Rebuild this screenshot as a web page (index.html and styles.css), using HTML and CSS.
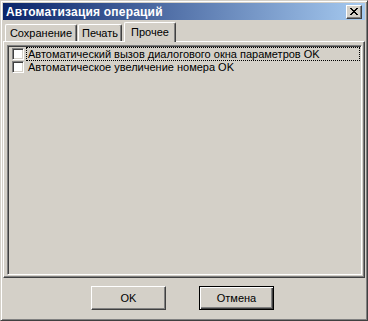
FILE: index.html
```html
<!DOCTYPE html>
<html lang="ru">
<head>
    <meta charset="UTF-8">
    <title>Автоматизация операций</title>
    <link rel="stylesheet" href="styles.css">
</head>
<body>

<div class="dialog">
    <div class="titlebar">
        <span class="title">Автоматизация операций</span>
        <span class="close">
            <svg width="8" height="7" viewBox="0 0 8 7" shape-rendering="crispEdges">
                <path d="M0 0h2v1H0zM6 0h2v1H6zM1 1h2v1H1zM5 1h2v1H5zM2 2h4v1H2zM3 3h2v1H3zM2 4h4v1H2zM1 5h2v1H1zM5 5h2v1H5zM0 6h2v1H0zM6 6h2v1H6z" fill="#000"/>
            </svg>
        </span>
    </div>

    <div class="tabs">
        <div class="tab tab-save">Сохранение</div>
        <div class="tab tab-print">Печать</div>
        <div class="tab tab-other active">Прочее</div>
    </div>

    <div class="panel">
        <div class="list">
            <div class="item">
                <span class="check"></span>
                <span class="label focus">Автоматический вызов диалогового окна параметров OK</span>
            </div>
            <div class="item">
                <span class="check"></span>
                <span class="label">Автоматическое увеличение номера OK</span>
            </div>
        </div>
    </div>

    <div class="buttons">
        <span class="btn">OK</span>
        <span class="btn default">Отмена</span>
    </div>
</div>

</body>
</html>
```

FILE: styles.css
```css
body {
    margin: 0;
    padding: 0;
    background-color: #d4d0c8;
    font-family: "Liberation Sans", Arial, sans-serif;
    font-size: 11px;
    color: #000;
}
.dialog {
    box-sizing: border-box;
    width: 368px;
    height: 321px;
    padding: 2px;
    background-color: #d4d0c8;
    border: 1px solid;
    border-color: #d4d0c8 #404040 #404040 #d4d0c8;
    box-shadow: inset 1px 1px #fff, inset -1px -1px #808080;
    display: flex;
    flex-direction: column;
}
.titlebar {
    height: 17px;
    background: linear-gradient(to right, #0a246a, #a6caf0);
    display: flex;
    align-items: center;
    padding: 0 3px 0 3px;
}
.title {
    flex: 1;
    color: #fff;
    font-weight: bold;
    font-size: 12px;
    letter-spacing: 0.2px;
}
.close {
    box-sizing: border-box;
    width: 16px;
    height: 14px;
    background-color: #d4d0c8;
    border: 1px solid;
    border-color: #fff #404040 #404040 #fff;
    box-shadow: inset -1px -1px #808080;
    display: flex;
    align-items: center;
    justify-content: center;
}
.tabs {
    height: 21px;
    display: flex;
    align-items: flex-end;
}
.tab {
    box-sizing: border-box;
    height: 17px;
    padding-top: 1px;
    border-top: 1px solid #fff;
    border-left: 1px solid #fff;
    border-right: 1px solid #404040;
    border-radius: 2px 2px 0 0;
    box-shadow: inset -1px 0 #808080;
    text-align: center;
    line-height: 14px;
    background-color: #d4d0c8;
}
.tab-save {
    width: 72px;
    margin-left: 2px;
}
.tab-print {
    width: 44px;
    margin-left: 1px;
}
.tab-other {
    width: 52px;
    margin-left: 2px;
}
.tab.active {
    position: relative;
    z-index: 1;
    height: 20px;
    margin-bottom: -1px;
    padding-top: 2px;
}
.panel {
    box-sizing: border-box;
    height: 237px;
    padding: 3px 1px 2px 3px;
    border: 1px solid;
    border-color: #fff #404040 #404040 #fff;
    box-shadow: inset -1px -1px #808080;
}
.list {
    box-sizing: border-box;
    height: 100%;
    width: 355px;
    padding: 0 2px;
    border: 1px solid;
    border-color: #808080 #fff #fff #808080;
    box-shadow: inset 1px 1px #404040, inset -1px -1px #d4d0c8;
}
.item {
    height: 13px;
    display: flex;
    align-items: center;
    margin-left: 2px;
}
.item:first-child {
    margin-top: 1px;
}
.check {
    box-sizing: border-box;
    width: 12px;
    height: 12px;
    background-color: #fff;
    border: 1px solid;
    border-color: #808080 #fff #fff #808080;
    box-shadow: inset 1px 1px #404040, inset -1px -1px #d4d0c8;
    margin-right: 3px;
}
.label {
    line-height: 12px;
    padding: 0 1px;
}
.label.focus {
    width: 330px;
    outline: 1px dotted #000;
}
.buttons {
    display: flex;
    gap: 33px;
    padding-left: 88px;
    margin-top: 8px;
}
.btn {
    box-sizing: border-box;
    width: 75px;
    height: 24px;
    border: 1px solid;
    border-color: #fff #404040 #404040 #fff;
    box-shadow: inset -1px -1px #808080;
    display: flex;
    align-items: center;
    justify-content: center;
}
.btn.default {
    border-color: #000;
    box-shadow: inset 1px 1px #fff, inset -1px -1px #404040, inset -2px -2px #808080;
}
```
